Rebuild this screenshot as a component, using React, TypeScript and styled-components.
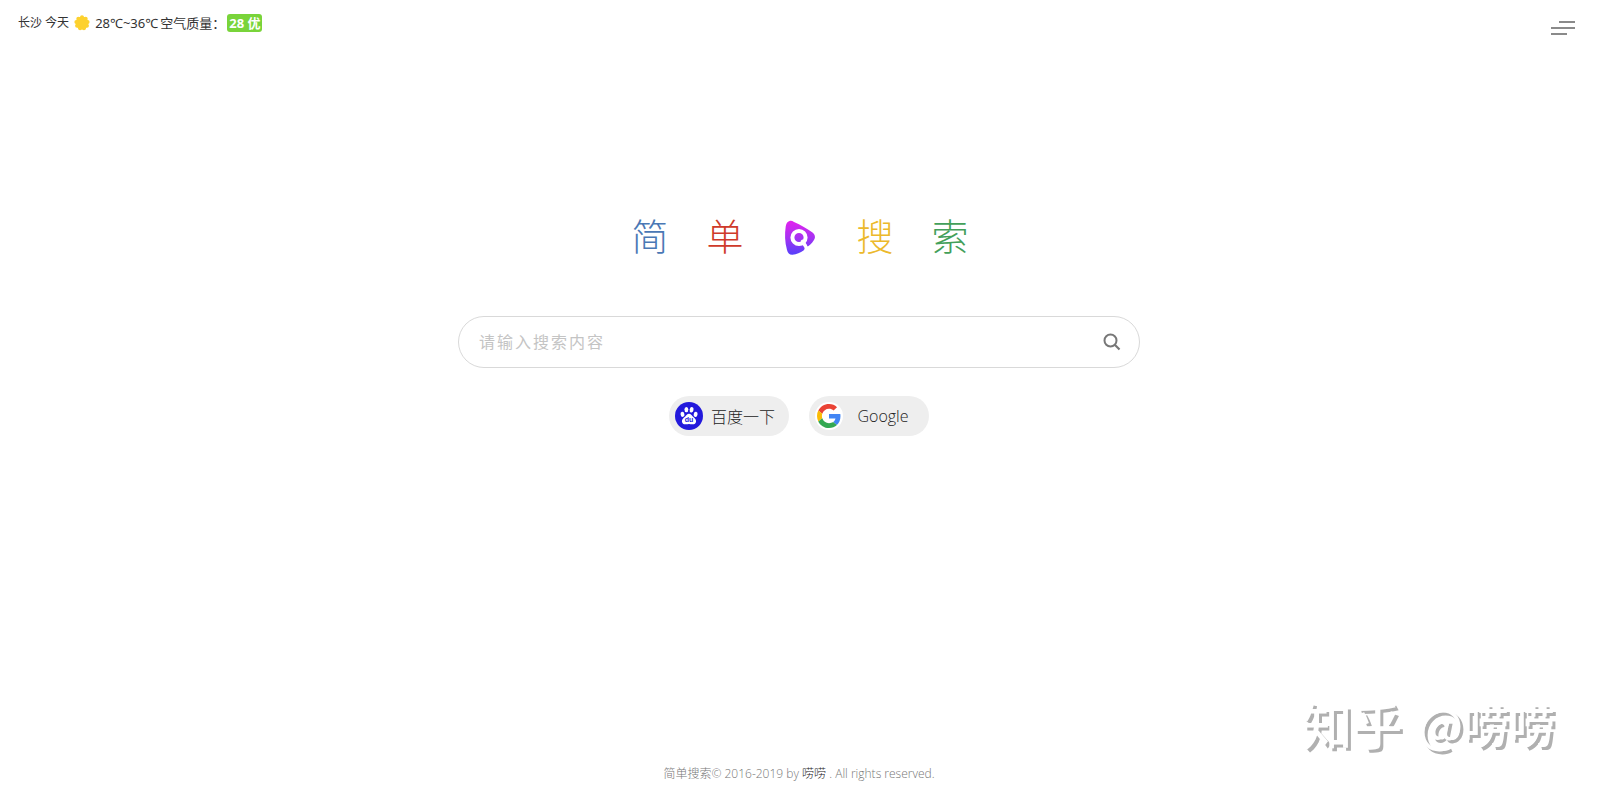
import React from "react";
import styled, { createGlobalStyle } from "styled-components";

const GlobalStyle = createGlobalStyle`
  * { box-sizing: border-box; }
  body {
    margin: 0;
    background: #fff;
    color: #333;
    font-family: "Open Sans", "Noto Sans CJK SC", sans-serif;
  }
  a { text-decoration: none; }
  button { font-family: inherit; cursor: pointer; border: 0; }
`;

const Page = styled.div`
  min-height: 100vh;
  display: flex;
  flex-direction: column;
`;

const TopBar = styled.header`
  display: flex;
  justify-content: space-between;
  align-items: flex-start;
  padding: 14px 23px 0 18px;
`;

const Weather = styled.div`
  display: flex;
  align-items: center;
  font-family: "Noto Sans", "Noto Sans CJK SC", sans-serif;
  font-size: 12px;
  line-height: 18px;
  color: #333;
`;

const Reading = styled.span`
  font-size: 13px;
  line-height: 16px;
  margin-right: 2px;
`;

const Badge = styled.span`
  background: #79d43a;
  color: #fff;
  font-size: 13px;
  font-weight: 700;
  padding: 0 2px;
  border-radius: 3px;
`;

const MenuButton = styled.button`
  display: flex;
  flex-direction: column;
  gap: 4px;
  width: 24px;
  margin-top: 7px;
  padding: 0;
  background: none;
`;

const MenuLine = styled.span<{ $short?: boolean; $end?: boolean }>`
  height: 2px;
  width: ${(p) => (p.$short ? "16px" : "24px")};
  align-self: ${(p) => (p.$end ? "flex-end" : "flex-start")};
  background: #8a8a8a;
`;

const Main = styled.main`
  display: flex;
  flex-direction: column;
  align-items: center;
  padding: 170px 20px 40px;
`;

const Title = styled.h1`
  display: flex;
  align-items: center;
  gap: 38px;
  margin: 0;
  padding-left: 2px;
  font-size: 37px;
  line-height: 60px;
  font-weight: 300;
  font-family: "Noto Sans CJK SC", sans-serif;
`;

const TitleChar = styled.span<{ $color: string }>`
  color: ${(p) => p.$color};
`;

const LogoSlot = styled.span`
  display: flex;
  justify-content: center;
  width: 37px;
  padding-top: 5px;
`;

const SearchForm = styled.form`
  display: flex;
  align-items: center;
  width: 100%;
  max-width: 682px;
  height: 52px;
  margin-top: 51px;
  padding: 0 18px 0 20px;
  border: 1px solid #d9d9d9;
  border-radius: 26px;
`;

const SearchInput = styled.input`
  flex: 1;
  min-width: 0;
  padding: 0;
  border: 0;
  outline: 0;
  background: none;
  color: #333;
  font-family: inherit;
  font-size: 16px;
  line-height: 24px;
  letter-spacing: 2px;
  &::placeholder { color: #c4c4c4; opacity: 1; }
`;

const SearchButton = styled.button`
  display: flex;
  padding: 0;
  background: none;
`;

const Engines = styled.div`
  display: flex;
  gap: 20px;
  margin-top: 28px;
`;

const Engine = styled.button`
  display: flex;
  align-items: center;
  width: 120px;
  height: 40px;
  padding: 0 6px;
  border-radius: 20px;
  background: #eee;
  color: #222;
  font-size: 16px;
  font-weight: 300;
`;

const EngineName = styled.span`
  flex: 1;
  text-align: center;
  white-space: nowrap;
`;

const Footer = styled.footer`
  margin-top: auto;
  padding-bottom: 10px;
  text-align: center;
  font-size: 12px;
  line-height: 18px;
  font-weight: 300;
  color: #777;
`;

const AuthorLink = styled.a`
  color: #222;
`;

const Watermark = styled.div`
  position: fixed;
  right: 43px;
  bottom: 40px;
  display: flex;
  align-items: center;
  gap: 16px;
  font-family: "Noto Sans CJK SC", sans-serif;
  font-size: 46px;
  line-height: 60px;
  font-weight: 500;
  color: #fff;
  text-shadow: 3px 3px 0 #b0b0b0;
  pointer-events: none;
`;

const WatermarkBrand = styled.span`
  font-size: 50px;
`;

const Sun = styled(({ className }: { className?: string }) => (
  <svg className={className} width="16" height="16" viewBox="0 0 16 16" aria-hidden="true">
    <circle cx="8" cy="8" r="6.4" fill="#fdd12e" />
    {Array.from({ length: 9 }, (_, i) => {
      const a = (i * 2 * Math.PI) / 9 - Math.PI / 2;
      return <circle key={i} cx={8 + 5.7 * Math.cos(a)} cy={8 + 5.7 * Math.sin(a)} r="2" fill="#fdd12e" />;
    })}
  </svg>
))`
  margin: 0 5px;
`;

const Logo = () => (
  <svg width="32" height="36" viewBox="0 0 32 36" aria-hidden="true">
    <defs>
      <linearGradient id="logoFill" x1="0" y1="0" x2="0" y2="1">
        <stop offset="0" stopColor="#e322ee" />
        <stop offset="0.5" stopColor="#a632f2" />
        <stop offset="1" stopColor="#5540fb" />
      </linearGradient>
    </defs>
    <path
      d="M5.500 1C7 0.500 8.500 1 10 1.900C16.500 4.800 23.500 8.500 28.500 12.500C31 14.500 31.500 17 30.500 19C29.500 21.500 27 24 24.500 26C23.500 26.700 22.600 26.300 22 25.500L20.500 26.800C20.700 28.200 20.700 29.500 19.500 30.500C16.500 32.700 12.500 34.300 8.500 34.800C5.500 35 3.800 33 3 30C0.800 22 0.600 14 1.700 6.500C2.200 3.500 3.300 1.600 5.500 1Z"
      fill="url(#logoFill)"
    />
    <circle cx="15" cy="17.500" r="6.600" fill="none" stroke="#fff" strokeWidth="4" />
    <path d="M18.500 21.500L21.500 26" stroke="#fff" strokeWidth="3.600" strokeLinecap="round" />
  </svg>
);

const SearchIcon = () => (
  <svg width="18" height="18" viewBox="0 0 18 18" fill="none" stroke="#777" strokeWidth="2" aria-hidden="true">
    <circle cx="7.500" cy="7.500" r="6" />
    <path d="M11.800 11.800L16.500 16.500" strokeWidth="2.200" />
  </svg>
);

const BaiduIcon = () => (
  <svg width="28" height="28" viewBox="0 0 28 28" aria-hidden="true">
    <circle cx="14" cy="14" r="14" fill="#2319dc" />
    <g fill="#fff" transform="translate(14 14) scale(1.14) translate(-14 -14.200)">
      <ellipse cx="8.300" cy="12.700" rx="1.700" ry="2.300" transform="rotate(-12 8.300 12.700)" />
      <ellipse cx="11.700" cy="8.600" rx="1.700" ry="2.400" />
      <ellipse cx="16.300" cy="8.700" rx="1.700" ry="2.400" transform="rotate(10 16.300 8.700)" />
      <ellipse cx="19.800" cy="12.800" rx="1.700" ry="2.300" transform="rotate(12 19.800 12.800)" />
      <path d="M14 12.200C15.700 12.200 16.300 13.500 17.300 14.600C18.700 15.900 20.400 17 20.200 19C20 21 18.600 21.600 17 21.500C15.800 21.400 15 21.200 14 21.200C13 21.200 12.200 21.400 11 21.500C9.400 21.600 8 21 7.800 19C7.600 17 9.300 15.900 10.700 14.600C11.700 13.500 12.300 12.200 14 12.200Z" />
    </g>
    <text x="14" y="20" fill="#2319dc" fontSize="7" fontWeight="700" textAnchor="middle" fontFamily="Liberation Sans, sans-serif">
      du
    </text>
  </svg>
);

const GoogleIcon = () => (
  <svg width="28" height="28" viewBox="-4 -4 56 56" aria-hidden="true">
    <circle cx="24" cy="24" r="28" fill="#fff" />
    <path fill="#EA4335" d="M24 9.500c3.540 0 6.710 1.220 9.210 3.600l6.850-6.850C35.900 2.380 30.470 0 24 0 14.620 0 6.510 5.380 2.560 13.220l7.980 6.190C12.430 13.720 17.740 9.500 24 9.500z" />
    <path fill="#4285F4" d="M46.980 24.550c0-1.570-.15-3.090-.38-4.550H24v9.020h12.940c-.58 2.960-2.260 5.480-4.780 7.180l7.730 6c4.510-4.180 7.090-10.360 7.090-17.650z" />
    <path fill="#FBBC05" d="M10.530 28.590c-.48-1.450-.76-2.990-.76-4.590s.27-3.140.76-4.590l-7.980-6.190C.92 16.460 0 20.120 0 24c0 3.880.92 7.540 2.560 10.780l7.970-6.190z" />
    <path fill="#34A853" d="M24 48c6.480 0 11.930-2.130 15.890-5.810l-7.730-6c-2.150 1.450-4.920 2.300-8.160 2.300-6.260 0-11.570-4.220-13.470-9.910l-7.980 6.190C6.510 42.620 14.620 48 24 48z" />
  </svg>
);

export default function App() {
  return (
    <Page>
      <GlobalStyle />
      <TopBar>
        <Weather>
          <span>长沙 今天</span>
          <Sun />
          <Reading>28℃~36℃</Reading>
          <Reading>空气质量：</Reading>
          <Badge>28 优</Badge>
        </Weather>
        <MenuButton type="button" aria-label="菜单">
          <MenuLine $short $end />
          <MenuLine />
          <MenuLine $short />
        </MenuButton>
      </TopBar>
      <Main>
        <Title>
          <TitleChar $color="#4a78b5">简</TitleChar>
          <TitleChar $color="#cf3a2a">单</TitleChar>
          <LogoSlot>
            <Logo />
          </LogoSlot>
          <TitleChar $color="#ecb92c">搜</TitleChar>
          <TitleChar $color="#43a05a">索</TitleChar>
        </Title>
        <SearchForm onSubmit={(e) => e.preventDefault()}>
          <SearchInput type="text" aria-label="搜索" placeholder="请输入搜索内容" />
          <SearchButton type="submit" aria-label="搜索">
            <SearchIcon />
          </SearchButton>
        </SearchForm>
        <Engines>
          <Engine type="button">
            <BaiduIcon />
            <EngineName>百度一下</EngineName>
          </Engine>
          <Engine type="button">
            <GoogleIcon />
            <EngineName>Google</EngineName>
          </Engine>
        </Engines>
      </Main>
      <Footer>
        简单搜索© 2016-2019 by <AuthorLink href="#">唠唠</AuthorLink> . All rights reserved.
      </Footer>
      <Watermark>
        <WatermarkBrand>知乎</WatermarkBrand>
        <span>@唠唠</span>
      </Watermark>
    </Page>
  );
}
